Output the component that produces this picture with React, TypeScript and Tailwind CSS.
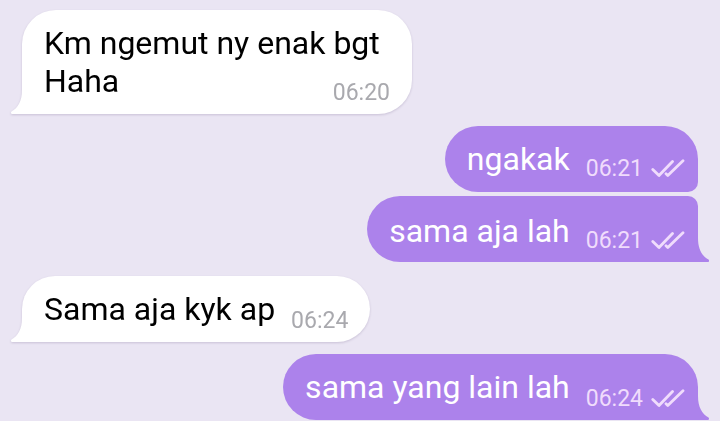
import clsx from "clsx";

type Message = {
  lines: string[];
  time: string;
  outgoing?: boolean;
  tail?: boolean;
  spacing: string;
  shape: string;
  stamp: string;
};

const messages: Message[] = [
  {
    lines: ["Km ngemut ny enak bgt", "Haha"],
    time: "06:20",
    tail: true,
    spacing: "mt-0",
    shape: "min-w-[390px] rounded-[34px] rounded-bl-none pt-[14px] pb-[14px]",
    stamp: "pt-[17px]",
  },
  {
    lines: ["ngakak"],
    time: "06:21",
    outgoing: true,
    spacing: "mt-3",
    shape: "rounded-[33px] rounded-br-[10px] pt-[14px] pb-[14px]",
    stamp: "pt-[15px]",
  },
  {
    lines: ["sama aja lah"],
    time: "06:21",
    outgoing: true,
    tail: true,
    spacing: "mt-1",
    shape: "rounded-[33px] rounded-tr-[10px] rounded-br-none pt-4 pb-3",
    stamp: "pt-[15px]",
  },
  {
    lines: ["Sama aja kyk ap"],
    time: "06:24",
    tail: true,
    spacing: "mt-[14px]",
    shape: "rounded-[33px] rounded-bl-none pt-[14px] pb-[14px]",
    stamp: "pt-[17px]",
  },
  {
    lines: ["sama yang lain lah"],
    time: "06:24",
    outgoing: true,
    tail: true,
    spacing: "mt-3",
    shape: "rounded-[33px] rounded-br-none pt-[14px] pb-[14px]",
    stamp: "pt-[17px]",
  },
];

function Checks() {
  return (
    <svg
      className="mb-1 ml-2 h-5 w-[34px]"
      viewBox="0 0 34 20"
      fill="none"
      stroke="currentColor"
      strokeWidth="2.8"
      strokeLinecap="round"
      strokeLinejoin="round"
      role="img"
      aria-label="Read"
    >
      <path d="M1.8 10.5 8 16.5 21.5 2.5" />
      <path d="M15 14.8 16.8 16.5 32 1.8" />
    </svg>
  );
}

function Tail({ outgoing }: { outgoing?: boolean }) {
  return (
    <svg
      className={clsx(
        "absolute bottom-0 h-6 w-3",
        outgoing ? "left-full -scale-x-100 text-[#ac82eb]" : "right-full text-white",
      )}
      viewBox="0 0 12 24"
      fill="currentColor"
      aria-hidden="true"
    >
      <path d="M12 0C12 11 8 18 1.5 21.5C0.5 22.3 1 24 2 24H12Z" />
    </svg>
  );
}

function Bubble({ message }: { message: Message }) {
  const { lines, time, outgoing, tail, spacing, shape, stamp } = message;
  const last = lines[lines.length - 1];
  return (
    <li
      className={clsx(
        "relative text-[32px] leading-[38px]",
        spacing,
        shape,
        outgoing
          ? "self-end bg-[#ac82eb] pr-[13px] pl-[22px] text-white"
          : "self-start bg-white pr-[22px] pl-[22px] text-black drop-shadow-[0_1px_1px_#c9c1d6]",
      )}
    >
      {tail && <Tail outgoing={outgoing} />}
      {lines.slice(0, -1).map((line) => (
        <p key={line}>{line}</p>
      ))}
      <div className="flex h-[38px] items-start justify-between gap-4">
        <p>{last}</p>
        <div
          className={clsx(
            "flex items-end text-[23px] leading-7",
            stamp,
            outgoing ? "text-[#f0dcfc]" : "text-[#a9a9ae]",
          )}
        >
          <time>{time}</time>
          {outgoing && <Checks />}
        </div>
      </div>
    </li>
  );
}

export default function App() {
  return (
    <main className="min-h-screen bg-[#eae5f3] pt-[10px] pr-[22px] pb-px pl-[22px] font-['Roboto',sans-serif]">
      <ul className="flex flex-col">
        {messages.map((message) => (
          <Bubble key={message.lines.join(" ")} message={message} />
        ))}
      </ul>
    </main>
  );
}
